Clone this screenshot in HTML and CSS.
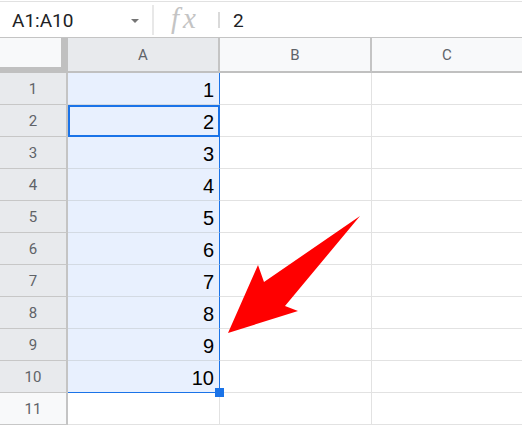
FILE: index.html
```html
<!DOCTYPE html>
<html>
<head>
<meta charset="utf-8">
<link rel="stylesheet" href="styles.css">
</head>
<body>
<div class="sheet">
  <div class="formula-bar">
    <div class="namebox">
      <span class="range">A1:A10</span>
      <span class="caret"></span>
    </div>
    <div class="sep"></div>
    <div class="fx">fx</div>
    <div class="sep2"></div>
    <div class="value">2</div>
  </div>
  <div class="grid">
    <div class="corner"></div>
    <div class="colhead sel">A</div>
    <div class="colhead">B</div>
    <div class="colhead last">C</div>

    <div class="rowhead sel">1</div><div class="cell a">1</div><div class="cell"></div><div class="cell last"></div>
    <div class="rowhead sel">2</div><div class="cell a active">2</div><div class="cell"></div><div class="cell last"></div>
    <div class="rowhead sel">3</div><div class="cell a">3</div><div class="cell"></div><div class="cell last"></div>
    <div class="rowhead sel">4</div><div class="cell a">4</div><div class="cell"></div><div class="cell last"></div>
    <div class="rowhead sel">5</div><div class="cell a">5</div><div class="cell"></div><div class="cell last"></div>
    <div class="rowhead sel">6</div><div class="cell a">6</div><div class="cell"></div><div class="cell last"></div>
    <div class="rowhead sel">7</div><div class="cell a">7</div><div class="cell"></div><div class="cell last"></div>
    <div class="rowhead sel">8</div><div class="cell a">8</div><div class="cell"></div><div class="cell last"></div>
    <div class="rowhead sel">9</div><div class="cell a">9</div><div class="cell"></div><div class="cell last"></div>
    <div class="rowhead sel">10</div><div class="cell a bottom">10<span class="handle"></span></div><div class="cell"></div><div class="cell last"></div>
    <div class="rowhead">11</div><div class="cell"></div><div class="cell"></div><div class="cell last"></div>
  </div>
  <svg class="arrow" width="522" height="426" viewBox="0 0 522 426">
    <polygon points="360,216 264,282 258,265 228,333 298,311 285,306" fill="#ff0000"/>
  </svg>
</div>
</body>
</html>
```

FILE: styles.css
```css
* { box-sizing: border-box; }
html, body { margin: 0; padding: 0; background: #fff; }
body { width: 522px; height: 426px; overflow: hidden; font-family: Roboto, "Liberation Sans", Arial, sans-serif; }

.sheet { position: relative; width: 522px; height: 426px; overflow: hidden; }

.formula-bar {
  margin-top: 1px;
  height: 36px;
  border-top: 1px solid #e1e1e1;
  display: flex;
  align-items: center;
}
.namebox {
  width: 152px;
  height: 100%;
  display: flex;
  align-items: center;
  padding-left: 12px;
}
.range {
  font-family: Roboto, "Liberation Sans", Arial, sans-serif;
  font-size: 19px;
  color: #202124;
  flex: 1;
  line-height: 1;
  margin-top: 1px;
}
.caret {
  width: 0; height: 0;
  border-left: 4px solid transparent;
  border-right: 4px solid transparent;
  border-top: 4px solid #757575;
  margin-right: 13px;
  margin-top: 2px;
}
.sep { width: 2px; height: 30px; background: #e8e8e8; }
.fx {
  font-family: "Liberation Serif", "DejaVu Serif", serif;
  font-style: italic;
  font-size: 29px;
  color: #c4c4c4;
  letter-spacing: 4px;
  padding-left: 17px;
  width: 64px;
  line-height: 1;
  margin-top: -3px;
}
.sep2 { width: 2px; height: 16px; background: #dadada; }
.value {
  padding-left: 13px;
  font-family: Roboto, "Liberation Sans", Arial, sans-serif;
  font-size: 19px;
  color: #202124;
  line-height: 1;
  margin-top: 1px;
}

.grid {
  position: relative;
  display: grid;
  grid-template-columns: 68px 152px 152px 150px;
  grid-template-rows: 35px repeat(11, 32px);
  border-top: 1px solid #c4c4c4;
}
.corner {
  background: #f8f9fa;
  border-right: 7px solid #c0c0c0;
  border-bottom: 6px solid #c0c0c0;
}
.colhead {
  background: #f8f9fa;
  border-right: 2px solid #c4c4c4;
  border-bottom: 2px solid #c0c0c0;
  display: flex;
  align-items: center;
  justify-content: center;
  font-size: 15px;
  color: #5f6368;
  padding-top: 1px;
}
.colhead.sel { background: #e8eaed; }
.colhead.last { border-right: none; }

.rowhead {
  background: #f8f9fa;
  border-right: 2px solid #c4c4c4;
  border-bottom: 1px solid #c7c7c7;
  display: flex;
  align-items: center;
  justify-content: center;
  font-size: 15px;
  color: #5f6368;
  padding-top: 1px;
}
.rowhead.sel { background: #e8eaed; }

.cell {
  border-right: 1px solid #e2e2e2;
  border-bottom: 1px solid #e2e2e2;
  font-family: "Liberation Sans", Arial, sans-serif;
  font-size: 20px;
  color: #000;
  display: flex;
  align-items: center;
  justify-content: flex-end;
  padding-right: 5px;
  padding-top: 3px;
}
.cell.last { border-right: none; }
.cell.a {
  background: #e8f0fe;
  border-right: 1px solid #1a73e8;
  border-bottom: 1px solid #d3dae3;
  position: relative;
}
.cell.a.bottom { border-bottom: 1px solid #1a73e8; }
.cell.active {
  outline: 2px solid #1a73e8;
  outline-offset: -2px;
}
.handle {
  position: absolute;
  right: -5px;
  bottom: -5px;
  width: 9px;
  height: 9px;
  background: #1a73e8;
  z-index: 2;
}

.arrow { position: absolute; left: 0; top: 0; pointer-events: none; }
```
